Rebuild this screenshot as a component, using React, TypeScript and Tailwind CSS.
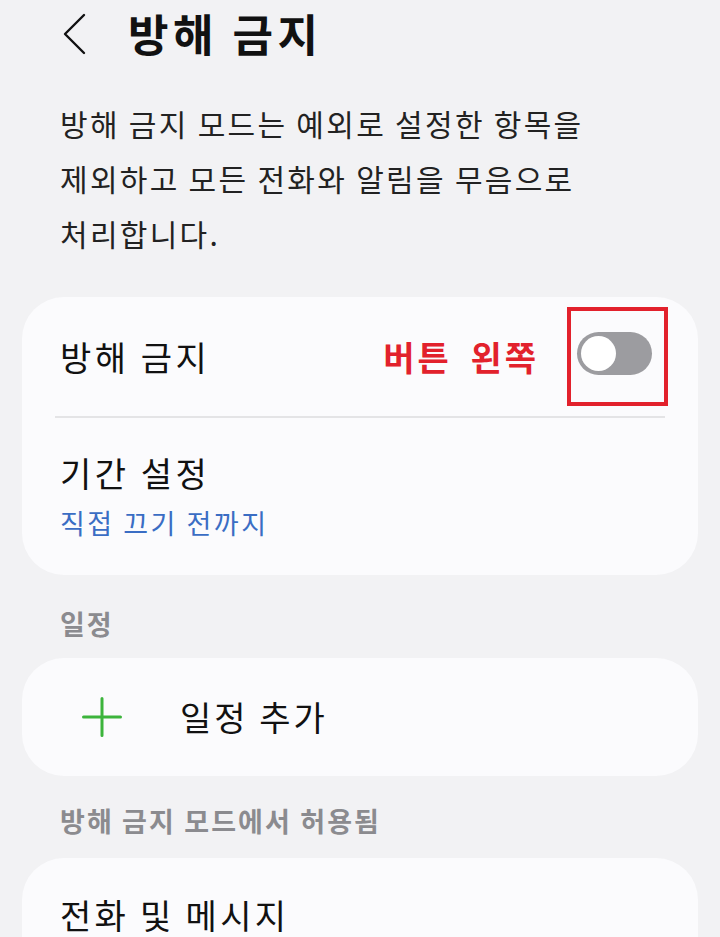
export default function App() {
  const font = { fontFamily: '"Noto Sans CJK KR", "Noto Sans", sans-serif' };
  return (
    <div className="h-[937px] w-[720px] overflow-hidden bg-[#f2f2f4] text-[#111]" style={font}>
      {/* Header */}
      <header className="flex h-[66px] items-center pl-[62px]">
        <svg width="24" height="42" viewBox="0 0 24 42" className="mt-[2px]">
          <polyline points="22,2 3,21 22,40" fill="none" stroke="#111" strokeWidth="2.4" strokeLinecap="round" strokeLinejoin="round" />
        </svg>
        <h1 className="ml-[42px] text-[44px] font-bold leading-[66px] tracking-[4.5px]">방해 금지</h1>
      </header>

      {/* Description */}
      <p className="mt-[30px] px-[60px] text-[30px] leading-[55px] tracking-[2.3px] text-[#222]">
        방해 금지 모드는 예외로 설정한 항목을
        <br />
        제외하고 모든 전화와 알림을 무음으로
        <br />
        처리합니다.
      </p>

      {/* Main card */}
      <section className="mx-[22px] mt-[36px] rounded-[42px] bg-[#fbfbfd]">
        <div className="flex h-[119px] items-center pl-[38px] pr-[30px]">
          <span className="text-[34px] leading-[44px] tracking-[3.5px]">방해 금지</span>
          <span className="ml-auto mr-[28px] text-[34px] font-bold leading-[44px] tracking-[3px] text-[#e2212c] [word-spacing:8px]">
            버튼 왼쪽
          </span>
          <div className="flex h-[99px] w-[101px] items-start border-4 border-[#e2212c] pl-[6px] pt-[21px]">
            <div className="relative h-[43px] w-[75px] rounded-full bg-[#9c9ca0]">
              <div className="absolute left-[4px] top-[4px] h-[35px] w-[35px] rounded-full bg-white" />
            </div>
          </div>
        </div>
        <div className="mx-[33px] h-[2px] bg-[#e4e4e6]" />
        <div className="pb-[34px] pl-[38px] pt-[33px]">
          <div className="text-[34px] leading-[44px] tracking-[3.5px]">기간 설정</div>
          <div className="mt-[10px] text-[27px] leading-[36px] tracking-[2.5px] text-[#3a6dc4]">직접 끄기 전까지</div>
        </div>
      </section>

      {/* Schedule */}
      <div className="mt-[32px] px-[60px] text-[27px] font-semibold leading-[34px] tracking-[2px] text-[#8b8b8f]">일정</div>
      <section className="mx-[22px] mt-[17px] flex h-[118px] items-center rounded-[42px] bg-[#fbfbfd] pl-[60px]">
        <svg width="40" height="40" viewBox="0 0 40 40">
          <path d="M20 1.5V38.5M1.5 20H38.5" stroke="#3cb43c" strokeWidth="3" strokeLinecap="round" />
        </svg>
        <span className="ml-[58px] text-[34px] leading-[44px] tracking-[3px]">일정 추가</span>
      </section>

      {/* Allowed */}
      <div className="mt-[28px] px-[60px] text-[27px] font-semibold leading-[34px] tracking-[2.1px] text-[#8b8b8f]">
        방해 금지 모드에서 허용됨
      </div>
      <section className="mx-[22px] mt-[20px] h-[79px] rounded-t-[42px] bg-[#fbfbfd] pl-[38px] pt-[39px]">
        <div className="text-[34px] leading-[36px] tracking-[3.3px]">전화 및 메시지</div>
      </section>
    </div>
  );
}
